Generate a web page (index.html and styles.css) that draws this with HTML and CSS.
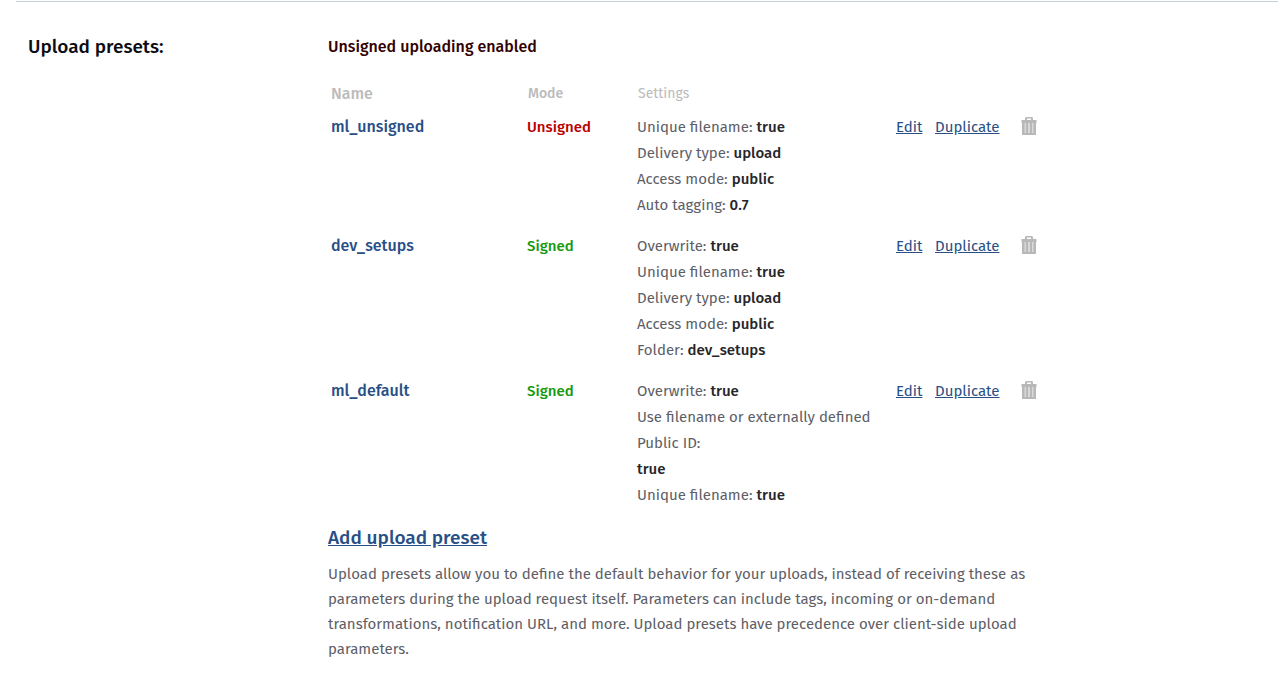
FILE: index.html
```html
<!DOCTYPE html>
<html lang="en">
<head>
<meta charset="utf-8">
<title>Upload presets</title>
<link rel="stylesheet" href="styles.css">
</head>
<body>
<svg class="sprite" aria-hidden="true">
  <symbol id="trash" viewBox="0 0 16 18">
    <path fill="#b8b8b8" d="M5 0h6l1 1v2h3.500v3H.5V3H4V1zM6 1.500V3h4V1.500z" fill-rule="evenodd"/>
    <path fill="#d9d9d9" d="M2 6h12v11H2z"/>
    <path fill="#b8b8b8" d="M1 6h2.500v10h9V6H15v12H1zM5 6h2v11H5zM9 6h2v11H9z"/>
  </symbol>
</svg>
<main class="section">
  <h2 class="section-title">Upload presets:</h2>
  <div class="section-body">
    <h3 class="status">Unsigned uploading enabled</h3>
    <table class="presets">
      <colgroup><col class="col-name"><col class="col-mode"><col class="col-settings"><col class="col-actions"></colgroup>
      <thead>
        <tr><th class="head-name">Name</th><th>Mode</th><th class="head-light">Settings</th><td></td></tr>
      </thead>
      <tbody>
        <tr>
          <td class="name">ml_unsigned</td>
          <td class="mode unsigned">Unsigned</td>
          <td><ul class="settings">
            <li>Unique filename: <b>true</b></li>
            <li>Delivery type: <b>upload</b></li>
            <li>Access mode: <b>public</b></li>
            <li>Auto tagging: <b>0.7</b></li>
          </ul></td>
          <td><div class="actions"><a class="edit" href="#">Edit</a><a class="duplicate" href="#">Duplicate</a><button class="delete" type="button" aria-label="Delete ml_unsigned"><svg class="trash"><use href="#trash"/></svg></button></div></td>
        </tr>
        <tr>
          <td class="name">dev_setups</td>
          <td class="mode signed">Signed</td>
          <td><ul class="settings">
            <li>Overwrite: <b>true</b></li>
            <li>Unique filename: <b>true</b></li>
            <li>Delivery type: <b>upload</b></li>
            <li>Access mode: <b>public</b></li>
            <li>Folder: <b>dev_setups</b></li>
          </ul></td>
          <td><div class="actions"><a class="edit" href="#">Edit</a><a class="duplicate" href="#">Duplicate</a><button class="delete" type="button" aria-label="Delete dev_setups"><svg class="trash"><use href="#trash"/></svg></button></div></td>
        </tr>
        <tr>
          <td class="name">ml_default</td>
          <td class="mode signed">Signed</td>
          <td><ul class="settings">
            <li>Overwrite: <b>true</b></li>
            <li>Use filename or externally defined<br>Public ID:<br><b>true</b></li>
            <li>Unique filename: <b>true</b></li>
          </ul></td>
          <td><div class="actions"><a class="edit" href="#">Edit</a><a class="duplicate" href="#">Duplicate</a><button class="delete" type="button" aria-label="Delete ml_default"><svg class="trash"><use href="#trash"/></svg></button></div></td>
        </tr>
      </tbody>
    </table>
    <a class="add" href="#">Add upload preset</a>
    <p class="help">Upload presets allow you to define the default behavior for your uploads, instead of receiving these as parameters during the upload request itself. Parameters can include tags, incoming or on-demand transformations, notification URL, and more. Upload presets have precedence over client-side upload parameters.</p>
  </div>
</main>
</body>
</html>
```

FILE: styles.css
```css
body {
  margin: 0;
  background: #fff;
  color: #5e5e66;
  font: 15px/26px "Fira Sans", "Noto Sans", sans-serif;
}
.sprite {
  position: absolute;
  width: 0;
  height: 0;
}
.section {
  display: grid;
  grid-template-columns: 300px minmax(0, 1fr);
  margin: 1px 0 0 16px;
  padding: 32px 12px 24px;
  border-top: 1px solid #c5cfd9;
}
.section-title,
.status {
  margin: 0;
  font-weight: 500;
}
.section-title {
  color: #0c0c14;
  font-size: 19px;
}
.status {
  color: #330000;
  font-size: 16px;
}
.presets {
  width: 100%;
  max-width: 720px;
  margin-top: 21px;
  border-collapse: collapse;
  table-layout: fixed;
}
.col-name { width: 199px; }
.col-mode { width: 110px; }
.col-settings { width: 259px; }
.presets th,
.presets td {
  padding: 0 0 15px;
  text-align: left;
  vertical-align: top;
}
.presets th {
  padding: 0 0 7px 1px;
  color: #bbb;
  font-size: 14px;
  font-weight: 500;
}
.presets thead td {
  padding: 0;
}
.presets .head-name {
  padding-left: 3px;
  font-size: 16px;
}
.presets .head-light {
  font-weight: 400;
}
.presets .name {
  padding-left: 3px;
  color: #284f86;
  font-size: 16px;
  font-weight: 500;
}
.mode {
  font-weight: 500;
}
.unsigned { color: #b80000; }
.signed { color: #189a10; }
.settings {
  margin: 0;
  padding: 0;
  list-style: none;
  white-space: nowrap;
}
.settings b {
  color: #26262b;
  font-weight: 500;
}
.actions {
  display: grid;
  grid-template-columns: 39px 86px 16px;
}
.actions a,
.add {
  color: #284f86;
}
.delete {
  height: 24px;
  padding: 0;
  border: 0;
  background: none;
  cursor: pointer;
}
.trash {
  display: block;
  width: 16px;
  height: 18px;
}
.add {
  display: inline-block;
  margin-top: 2px;
  font-size: 19px;
  font-weight: 500;
}
.help {
  max-width: 710px;
  margin: 10px 0 0;
  line-height: 25px;
}
```
